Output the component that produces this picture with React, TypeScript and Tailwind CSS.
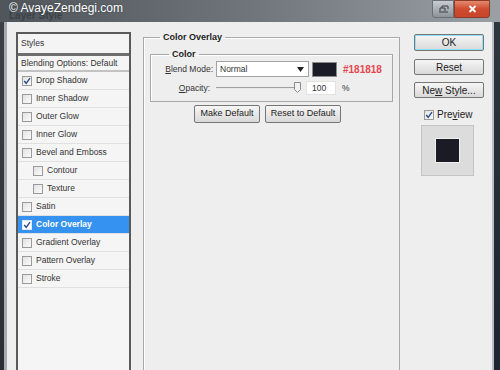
import React from 'react';

const font = { fontFamily: '"Liberation Sans", Arial, sans-serif' };

const Check: React.FC<{ checked?: boolean; light?: boolean }> = ({ checked, light }) => (
  <span
    className={`flex h-[10px] w-[10px] shrink-0 items-center justify-center border ${
      light ? 'border-[#dfe9f7] bg-white' : 'border-[#9a9a9a] bg-gradient-to-br from-[#e2e2e2] to-[#fbfbfb]'
    }`}
  >
    {checked && (
      <svg width="8" height="8" viewBox="0 0 8 8">
        <polyline points="1.2 4 3.2 6.3 7 1.2" fill="none" stroke="#2b4a8c" strokeWidth="1.4" />
      </svg>
    )}
  </span>
);

const styleRows: { label: string; checked?: boolean; indent?: boolean; active?: boolean }[] = [
  { label: 'Drop Shadow', checked: true },
  { label: 'Inner Shadow' },
  { label: 'Outer Glow' },
  { label: 'Inner Glow' },
  { label: 'Bevel and Emboss' },
  { label: 'Contour', indent: true },
  { label: 'Texture', indent: true },
  { label: 'Satin' },
  { label: 'Color Overlay', checked: true, active: true },
  { label: 'Gradient Overlay' },
  { label: 'Pattern Overlay' },
  { label: 'Stroke' },
];

const Btn: React.FC<{ children: React.ReactNode; className?: string }> = ({ children, className }) => (
  <div
    className={`flex items-center justify-center rounded-[2px] border border-[#767676] bg-gradient-to-b from-[#f6f6f6] to-[#d9d9d9] text-[9px] text-[#222] ${className ?? ''}`}
  >
    {children}
  </div>
);

export default function App() {
  return (
    <div className="relative h-[370px] w-[500px] overflow-hidden bg-[#eeeeee]" style={font}>
      {/* title bar */}
      <div className="flex h-[22px] items-start bg-gradient-to-r from-[#4f555b] via-[#6f757b] to-[#9ba0a5]">
        <span className="ml-[9px] mt-[10px] text-[10px] font-bold leading-[11px] text-[#2e3338] opacity-60">Layer Style</span>
        <div className="ml-auto mr-[10px] flex">
          <div className="flex h-[18px] w-[22px] items-center justify-center rounded-bl-[3px] border border-[#6a7077] bg-gradient-to-b from-[#c9cdd1] to-[#8d9399]">
            <svg width="11" height="8" viewBox="0 0 11 8">
              <path d="M1 7h9M2 6V3h5v3M4 3V1h6v3" fill="none" stroke="#3a3f45" strokeWidth="1" />
            </svg>
          </div>
          <div className="flex h-[18px] w-[36px] items-center justify-center rounded-br-[3px] border border-[#8a3a2a] bg-gradient-to-b from-[#e48a6c] via-[#cf4b2f] to-[#c8442a]">
            <svg width="9" height="8" viewBox="0 0 9 8">
              <path d="M1.5 1l6 6M7.5 1l-6 6" stroke="#fff" strokeWidth="1.8" />
            </svg>
          </div>
        </div>
      </div>
      <span className="absolute left-[9px] top-[1px] text-[12px] leading-[14px] text-white [text-shadow:0_0_2px_#3a3f44]">
        © AvayeZendegi.com
      </span>

      <div className="flex h-[348px]">
        {/* left frame */}
        <div className="flex w-[7px]">
          <div className="w-[4px] bg-gradient-to-b from-[#3b4147] to-[#2a2f35]" />
          <div className="w-[3px] bg-[#a7abaf]" />
        </div>

        {/* content */}
        <div className="flex flex-1 pl-[9px] pt-[10px]">
          {/* styles list */}
          <div className="h-[400px] w-[115px] shrink-0 border-2 border-[#5a5a5a] bg-[#f5f5f5] text-[8.5px] text-[#333]">
            <div className="flex h-[19px] items-center bg-[#f4f4f4] pl-[3px]">Styles</div>
            <div className="h-[3px] bg-[#6e6e6e]" />
            <div className="flex h-[16px] items-center border-b-2 border-[#c2c2c2] pl-[3px]">Blending Options: Default</div>
            {styleRows.map((r) => (
              <div
                key={r.label}
                className={`flex h-[18px] items-center gap-[4px] border-b border-[#e0e0e0] ${r.indent ? 'pl-[15px]' : 'pl-[4px]'} ${
                  r.active ? 'bg-[#3592f0] font-bold text-white' : ''
                }`}
              >
                <Check checked={r.checked} light={r.active} />
                <span>{r.label}</span>
              </div>
            ))}
          </div>

          {/* main group */}
          <fieldset className="ml-[12px] mt-[-1px] h-[400px] w-[257px] shrink-0 border border-[#a8a8a8] px-[6px] pt-[2px] shadow-[inset_1px_1px_0_#fff]">
            <legend className="ml-[10px] px-[3px] text-[9px] font-bold text-[#222]">Color Overlay</legend>
            <fieldset className="mt-[1px] h-[54px] border border-[#a8a8a8] px-[8px] shadow-[inset_1px_1px_0_#fff]">
              <legend className="ml-[10px] px-[3px] text-[9px] font-bold text-[#222]">Color</legend>
              <div className="flex items-center text-[8.5px] text-[#333]">
                <span className="w-[54px] text-right">
                  <span className="underline">B</span>lend Mode:
                </span>
                <div className="ml-[3px] flex h-[16px] w-[93px] items-center border border-[#a3a3a3] bg-white pl-[3px] pr-[4px]">
                  <span>Normal</span>
                  <svg className="ml-auto" width="7" height="5" viewBox="0 0 7 5">
                    <path d="M0 0h7L3.5 5z" fill="#222" />
                  </svg>
                </div>
                <div className="ml-[3px] h-[15px] w-[25px] border border-[#8a8a8a] bg-[#1b1b28]" />
                <span className="ml-[6px] text-[10px] font-bold text-[#e5464f]">#181818</span>
              </div>
              <div className="mt-[4px] flex items-center text-[8.5px] text-[#333]">
                <span className="w-[51px] text-right">
                  <span className="underline">O</span>pacity:
                </span>
                <div className="relative ml-[6px] flex h-[12px] w-[84px] items-center">
                  <div className="h-[2px] w-full border-t border-[#a0a0a0] bg-[#e8e8e8]" />
                  <svg className="absolute left-[78px] top-0" width="7" height="11" viewBox="0 0 7 11">
                    <path d="M0.5 0.5h6v7l-3 3-3-3z" fill="#f2f2f2" stroke="#8a8a8a" />
                  </svg>
                </div>
                <div className="ml-[6px] flex h-[14px] w-[30px] items-center border border-[#e2e2e2] bg-white pl-[5px]">100</div>
                <span className="ml-[6px]">%</span>
              </div>
            </fieldset>
            <div className="mt-[3px] flex justify-center gap-[5px] pr-[8px]">
              <Btn className="h-[18px] w-[66px]">Make Default</Btn>
              <Btn className="h-[18px] w-[76px]">Reset to Default</Btn>
            </div>
          </fieldset>

          {/* right column */}
          <div className="ml-[14px] flex w-[70px] shrink-0 flex-col pt-[2px] text-[9px]">
            <Btn className="h-[17px] border-[#3a8cc8] text-[10px] shadow-[inset_0_0_0_1px_#8fe0f8]">OK</Btn>
            <Btn className="mt-[8px] h-[16px] text-[10px]">Reset</Btn>
            <Btn className="mt-[7px] h-[16px] text-[10px]">
              Ne<span className="underline">w</span>&nbsp;Style...
            </Btn>
            <div className="mt-[9px] flex items-center gap-[3px] pl-[10px] text-[10px] text-[#222]">
              <Check checked />
              <span>
                Pre<span className="underline">v</span>iew
              </span>
            </div>
            <div className="ml-[7px] mt-[3px] flex h-[51px] w-[53px] items-center justify-center border border-[#c4c4c4] bg-[#dcdcdc]">
              <div className="h-[25px] w-[25px] border border-[#f0f0f0] bg-[#1b1b25]" />
            </div>
          </div>
        </div>

        {/* right frame */}
        <div className="flex w-[8px]">
          <div className="w-[2px] bg-[#b9bdc1]" />
          <div className="w-[6px] bg-gradient-to-b from-[#2f353d] to-[#1e2430]" />
        </div>
      </div>
    </div>
  );
}
